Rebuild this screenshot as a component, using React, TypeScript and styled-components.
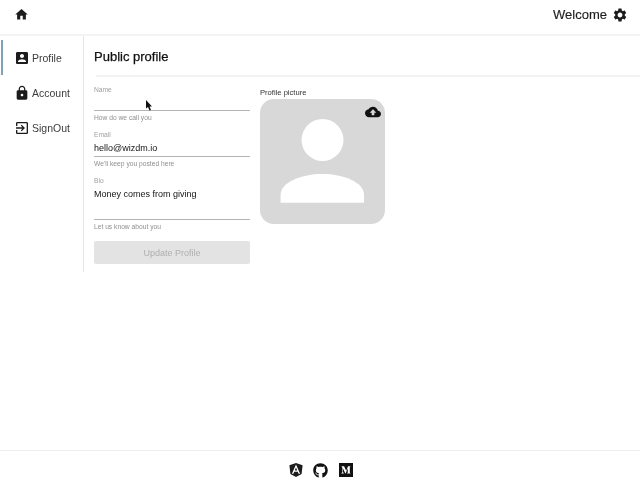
import React from "react";
import styled, { createGlobalStyle } from "styled-components";
import { FaGithub, FaMedium } from "react-icons/fa";

const Global = createGlobalStyle`
  html, body { margin: 0; padding: 0; background: #fff; }
  body { font-family: "Liberation Sans", Arial, sans-serif; color: #1c1c1c; }
  * { box-sizing: border-box; }
`;
const Page = styled.div`
  position: relative;
  width: 640px;
  height: 480px;
  overflow: hidden;
  display: flex;
  flex-direction: column;
  filter: blur(0.35px);
`;
const Header = styled.header`
  height: 36px;
  flex: none;
  display: flex;
  align-items: center;
  justify-content: space-between;
  padding: 0 12px 5px 14px;
  border-bottom: 2px solid #f3f3f3;
`;
const Welcome = styled.div`
  display: flex;
  align-items: center;
  gap: 5px;
  font-size: 13px;
  color: #1e1e1e;
  -webkit-text-stroke: 0.15px #1e1e1e;
`;
const Main = styled.main`
  flex: 1;
  min-height: 0;
  display: flex;
  align-items: flex-start;
`;
const Side = styled.nav`
  width: 84px;
  height: 236px;
  flex: none;
  border-right: 1px solid #e6e6e6;
  padding-top: 4px;
  display: flex;
  flex-direction: column;
`;
const NavItem = styled.div<{ $active?: boolean }>`
  height: 35px;
  display: flex;
  align-items: center;
  gap: 2px;
  font-size: 10.5px;
  color: #3c3c3c;
  border-left: ${(p) => (p.$active ? "2px solid #7fa3b4" : "0")};
  margin-left: ${(p) => (p.$active ? "1px" : "0")};
  padding-left: ${(p) => (p.$active ? "11px" : "14px")};
`;
const Content = styled.section`
  flex: 1;
  padding: 12px 0 0 10px;
`;
const Title = styled.h1`
  margin: 0;
  font-size: 13px;
  line-height: 18px;
  font-weight: 400;
  color: #111;
  -webkit-text-stroke: 0.25px #111;
`;
const Rule = styled.div`
  height: 2px;
  margin: 9px 0 0 2px;
  background: #f2f2f2;
`;
const Columns = styled.div`
  display: flex;
  gap: 10px;
`;
const Form = styled.form`
  width: 156px;
  padding-top: 8px;
  display: flex;
  flex-direction: column;
`;
const Field = styled.div`
  display: flex;
  flex-direction: column;
  margin-bottom: 8px;
`;
const Label = styled.label`
  font-size: 6.7px;
  line-height: 9px;
  color: #a0a0a0;
`;
const Value = styled.div<{ $height: number }>`
  height: ${(p) => p.$height}px;
  padding-top: 2.5px;
  font-size: 9px;
  line-height: 12px;
  color: #141414;
  border-bottom: 1px solid #b4b4b4;
`;
const Hint = styled.div`
  margin-top: 2px;
  font-size: 6.7px;
  line-height: 9px;
  color: #8f8f8f;
`;
const Submit = styled.button`
  width: 156px;
  height: 23px;
  margin-top: 2px;
  border: 0;
  border-radius: 2px;
  background: #e3e3e3;
  color: #b0b0b0;
  font: 9px "Liberation Sans", Arial, sans-serif;
  padding: 0;
`;
const PictureColumn = styled.div`
  padding-top: 10px;
`;
const PictureLabel = styled.div`
  font-size: 7.6px;
  line-height: 11px;
  color: #333;
  margin-bottom: 1px;
`;
const Picture = styled.div`
  position: relative;
  width: 125px;
  height: 125px;
  border-radius: 14px;
  background: #d8d8d8;
  overflow: hidden;
`;
const UploadIcon = styled.svg`
  position: absolute;
  top: 5px;
  right: 4.5px;
  fill: #111;
`;
const Footer = styled.footer`
  height: 30px;
  flex: none;
  border-top: 1px solid #eeeeee;
  display: flex;
  align-items: center;
  justify-content: center;
  gap: 10px;
  color: #111;
  padding: 9px 0 0 3px;
`;
const Glyph = styled.svg`
  flex: none;
  fill: #1c1c1c;
`;
const Cursor = styled.svg`
  position: absolute;
  left: 145px;
  top: 100px;
`;

const P = {
  home: "M10 20v-6h4v6h5v-8h3L12 3 2 12h3v8z",
  gear: "M19.14 12.94c.04-.3.06-.61.06-.94 0-.32-.02-.64-.07-.94l2.03-1.58a.49.49 0 0 0 .12-.61l-1.92-3.32a.488.488 0 0 0-.59-.22l-2.39.96c-.5-.38-1.03-.7-1.62-.94l-.36-2.54a.484.484 0 0 0-.48-.41h-3.84c-.24 0-.43.17-.47.41l-.36 2.54c-.59.24-1.13.57-1.62.94l-2.39-.96c-.22-.08-.47 0-.59.22L2.74 8.87c-.12.21-.08.47.12.61l2.03 1.58c-.05.3-.09.63-.09.94s.02.64.07.94l-2.03 1.58a.49.49 0 0 0-.12.61l1.92 3.32c.12.22.37.29.59.22l2.39-.96c.5.38 1.03.7 1.62.94l.36 2.54c.05.24.24.41.48.41h3.84c.24 0 .44-.17.47-.41l.36-2.54c.59-.24 1.13-.56 1.62-.94l2.39.96c.22.08.47 0 .59-.22l1.92-3.32c.12-.22.07-.47-.12-.61l-2.01-1.58zM12 15.6c-1.98 0-3.6-1.62-3.6-3.6s1.62-3.6 3.6-3.6 3.6 1.62 3.6 3.6-1.62 3.6-3.6 3.6z",
  box: "M3 5v14c0 1.1.89 2 2 2h14c1.1 0 2-.9 2-2V5c0-1.1-.9-2-2-2H5c-1.11 0-2 .9-2 2zm12 4c0 1.66-1.34 3-3 3s-3-1.34-3-3 1.34-3 3-3 3 1.34 3 3zm-9 8c0-2 4-3.1 6-3.1s6 1.1 6 3.1v1H6v-1z",
  lock: "M18 8h-1V6c0-2.76-2.24-5-5-5S7 3.24 7 6v2H6c-1.1 0-2 .9-2 2v10c0 1.1.9 2 2 2h12c1.1 0 2-.9 2-2V10c0-1.1-.9-2-2-2zm-6 9c-1.1 0-2-.9-2-2s.9-2 2-2 2 .9 2 2-.9 2-2 2zm3.1-9H8.9V6c0-1.71 1.39-3.1 3.1-3.1 1.71 0 3.1 1.39 3.1 3.1v2z",
  exit: "M10.09 15.59L11.5 17l5-5-5-5-1.41 1.41L12.67 11H3v2h9.67l-2.58 2.59zM19 3H5c-1.11 0-2 .9-2 2v4h2V5h14v14H5v-4H3v4c0 1.1.89 2 2 2h14c1.1 0 2-.9 2-2V5c0-1.1-.9-2-2-2z",
  cloud: "M19.35 10.04C18.67 6.59 15.64 4 12 4 9.11 4 6.6 5.64 5.35 8.04 2.34 8.36 0 10.91 0 14c0 3.31 2.69 6 6 6h13c2.76 0 5-2.24 5-5 0-2.64-2.05-4.78-4.65-4.96zM14 13v4h-4v-4H7l5-5 5 5h-3z",
  angular: "M9.931 12.645h4.138l-2.07-4.908m0-7.737L.68 3.982l1.726 14.771L12 24l9.596-5.242L23.32 3.984 11.999.001zm7.064 18.31h-2.638l-1.422-3.503H8.996l-1.422 3.504h-2.64L12 2.65z",
};

function Icon({ d, size }: { d: string; size: number }) {
  return (
    <Glyph width={size} height={size} viewBox="0 0 24 24">
      <path d={d} fillRule="evenodd" />
    </Glyph>
  );
}

export default function App() {
  return (
    <Page>
      <Global />
      <Header>
        <Icon d={P.home} size={15} />
        <Welcome>
          Welcome
          <Icon d={P.gear} size={16} />
        </Welcome>
      </Header>
      <Main>
        <Side>
          <NavItem $active>
            <Icon d={P.box} size={16} />
            Profile
          </NavItem>
          <NavItem>
            <Icon d={P.lock} size={16} />
            Account
          </NavItem>
          <NavItem>
            <Icon d={P.exit} size={16} />
            SignOut
          </NavItem>
        </Side>
        <Content>
          <Title>Public profile</Title>
          <Rule />
          <Columns>
            <Form>
              <Field>
                <Label>Name</Label>
                <Value $height={17} />
                <Hint>How do we call you</Hint>
              </Field>
              <Field>
                <Label>Email</Label>
                <Value $height={18}>hello@wizdm.io</Value>
                <Hint>We'll keep you posted here</Hint>
              </Field>
              <Field>
                <Label>Bio</Label>
                <Value $height={35}>Money comes from giving</Value>
                <Hint>Let us know about you</Hint>
              </Field>
              <Submit type="button" disabled>Update Profile</Submit>
            </Form>
            <PictureColumn>
              <PictureLabel>Profile picture</PictureLabel>
              <Picture>
                <svg width="125" height="125" viewBox="0 0 125 125">
                  <circle cx="62.5" cy="41" r="21" fill="#fff" />
                  <path d="M20.6 103.7 V96 C20.6 83 42 75 62.5 75 C83 75 104 83 104 96 V103.7 Z" fill="#fff" />
                </svg>
                <UploadIcon width="16" height="16" viewBox="0 0 24 24">
                  <path d={P.cloud} fillRule="evenodd" />
                </UploadIcon>
              </Picture>
            </PictureColumn>
          </Columns>
        </Content>
      </Main>
      <Footer>
        <Icon d={P.angular} size={14} />
        <FaGithub size={15} />
        <FaMedium size={16} />
      </Footer>
      <Cursor width="8" height="12" viewBox="0 0 8 12">
        <path d="M1 0 L1 8.5 L3 7 L4.5 10.5 L6 10 L4.6 6.6 L7 6.4 Z" fill="#111" />
      </Cursor>
    </Page>
  );
}
